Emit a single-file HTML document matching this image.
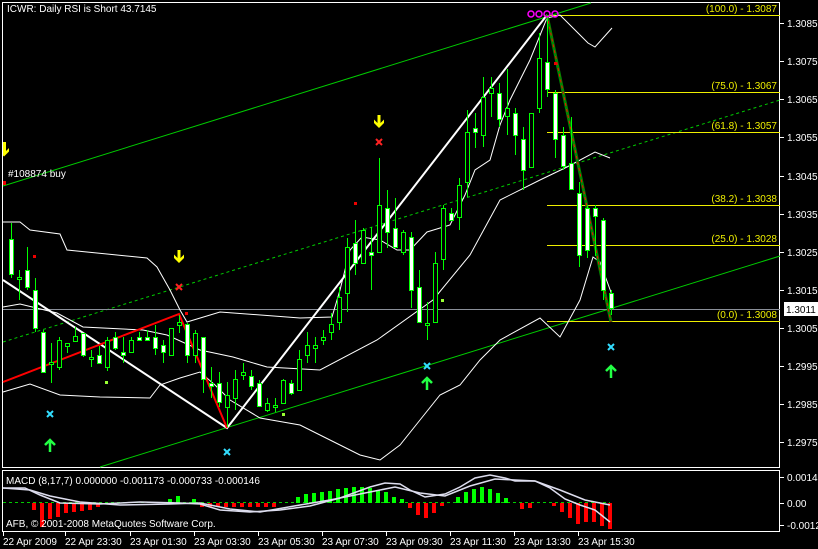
<!DOCTYPE html>
<html><head><meta charset="utf-8"><style>
html,body{margin:0;padding:0;background:#000;width:818px;height:549px;overflow:hidden}
svg{display:block}
text{font-family:"Liberation Sans",sans-serif;font-size:10px;fill:#fff}
</style></head><body>
<svg width="818" height="549" viewBox="0 0 818 549" xmlns="http://www.w3.org/2000/svg">
<rect width="818" height="549" fill="#000"/>
<rect x="2.5" y="2.5" width="777" height="465" fill="none" stroke="#fff" stroke-width="1"/>
<rect x="2.5" y="470.5" width="777" height="61" fill="none" stroke="#fff" stroke-width="1"/>
<line x1="3" y1="186" x2="591" y2="3" stroke="#0c0" stroke-width="1"/>
<line x1="3" y1="342" x2="780" y2="100" stroke="#0c0" stroke-width="1" stroke-dasharray="3,3"/>
<line x1="100" y1="467" x2="780" y2="256" stroke="#0c0" stroke-width="1"/>
<line x1="3" y1="309.5" x2="780" y2="309.5" stroke="#8a8f99" stroke-width="1"/>
<g stroke="#ee0" stroke-width="1">
<line x1="547" y1="15.5" x2="780" y2="15.5"/>
<line x1="547" y1="92.5" x2="780" y2="92.5"/>
<line x1="547" y1="132.5" x2="780" y2="132.5"/>
<line x1="547" y1="205.5" x2="780" y2="205.5"/>
<line x1="547" y1="245.5" x2="780" y2="245.5"/>
<line x1="547" y1="321.5" x2="780" y2="321.5"/>
</g>
<g style="font-size:10px">
<text x="777" y="12" text-anchor="end" style="fill:#ee0">(100.0) - 1.3087</text>
<text x="777" y="89" text-anchor="end" style="fill:#ee0">(75.0) - 1.3067</text>
<text x="777" y="129" text-anchor="end" style="fill:#ee0">(61.8) - 1.3057</text>
<text x="777" y="202" text-anchor="end" style="fill:#ee0">(38.2) - 1.3038</text>
<text x="777" y="242" text-anchor="end" style="fill:#ee0">(25.0) - 1.3028</text>
<text x="777" y="318" text-anchor="end" style="fill:#ee0">(0.0) - 1.3008</text>
</g>
<g fill="none" stroke="#fff" stroke-width="1">
<polyline points="3,222 20,222 30,230 60,234 67,250 147,258 157,267 170,290 180,310 187,322 220,312 300,318 332,317 340,290 350,250 362,237 380,240 397,250 410,250 427,232 450,225 465,195 475,170 490,160 500,125 510,100 530,60 547,18 560,15 575,30 588,43 595,47 612,28"/>
<polyline points="3,307 20,304 57,313 83,327 143,330 167,335 200,350 233,357 267,367 320,370 377,340 433,300 470,255 500,200 540,180 567,167 595,152 610,158"/>
<polyline points="3,392 30,384 60,395 100,397 150,398 160,385 180,378 200,372 215,385 230,400 260,418 300,425 330,440 360,455 380,460 400,445 420,420 440,395 460,385 480,360 500,340 540,318 560,337 580,300 593,257 600,262 612,295"/>
</g>
<polyline points="3,280 227,428 547,15" fill="none" stroke="#fff" stroke-width="2"/>
<polyline points="3,382 179,314 227,428" fill="none" stroke="#f00" stroke-width="2"/>
<line x1="547" y1="15" x2="611" y2="322" stroke="#080" stroke-width="3"/>
<line x1="547" y1="15" x2="611" y2="322" stroke="#f00" stroke-width="1" stroke-dasharray="3,3"/>
<g stroke="#0f0" stroke-width="1">
<path d="M11.5 223V278M19.5 270V300M27.5 247V290M35.5 278V332M43.5 330V372M51.5 343V383M59.5 337V370M67.5 343V353M75.5 327V341M83.5 333V357M91.5 350V367M99.5 346V363M107.5 337V371M115.5 332V350M123.5 337V363M131.5 337V352M139.5 332V340M147.5 330V340M155.5 325V355M163.5 340V363M171.5 328V355M179.5 315V333M187.5 323V363M195.5 330V363M203.5 337V393M211.5 367V398M219.5 372V407M227.5 382V427M235.5 370V410M243.5 363V380M251.5 370V390M259.5 380V407M267.5 398V412M275.5 398V412M283.5 379V404M291.5 380V395M299.5 350V390M307.5 332V363M315.5 337V363M323.5 330V345M331.5 313V340M339.5 287V330M347.5 238V312M355.5 220V275M363.5 228V263M371.5 227V290M379.5 158V252M387.5 190V248M395.5 198V248M403.5 230V255M411.5 232V308M419.5 270V322M427.5 302V340M435.5 252V322M443.5 205V270M451.5 208V220M459.5 178V230M467.5 110V197M475.5 113V148M483.5 77V147M491.5 77V117M499.5 83V127M507.5 69V135M515.5 108V155M523.5 127V190M531.5 113V167M539.5 33V113M547.5 15V97M555.5 90V158M563.5 127V170M571.5 117V190M579.5 182V267M587.5 205V258M595.5 205V256M603.5 218V300M611.5 290V315"/>
<g fill="#fff">
<rect x="9.5" y="239.5" width="4" height="35"/><rect x="25.5" y="270.5" width="4" height="17"/><rect x="33.5" y="290.5" width="4" height="38"/><rect x="41.5" y="332.5" width="4" height="40"/><rect x="81.5" y="333.5" width="4" height="22"/><rect x="97.5" y="355.5" width="4" height="8"/><rect x="113.5" y="337.5" width="4" height="11"/><rect x="121.5" y="352.5" width="4" height="3"/><rect x="137.5" y="337.5" width="4" height="3"/><rect x="145.5" y="337.5" width="4" height="3"/><rect x="153.5" y="337.5" width="4" height="11"/><rect x="161.5" y="345.5" width="4" height="7"/><rect x="185.5" y="324.5" width="4" height="31"/><rect x="201.5" y="337.5" width="4" height="42"/><rect x="209.5" y="383.5" width="4" height="3"/><rect x="217.5" y="383.5" width="4" height="19"/><rect x="249.5" y="376.5" width="4" height="10"/><rect x="257.5" y="383.5" width="4" height="23"/><rect x="289.5" y="383.5" width="4" height="10"/><rect x="353.5" y="243.5" width="4" height="20"/><rect x="369.5" y="252.5" width="4" height="3"/><rect x="385.5" y="208.5" width="4" height="24"/><rect x="393.5" y="228.5" width="4" height="19"/><rect x="409.5" y="237.5" width="4" height="53"/><rect x="417.5" y="287.5" width="4" height="35"/><rect x="449.5" y="213.5" width="4" height="7"/><rect x="473.5" y="128.5" width="4" height="4"/><rect x="497.5" y="93.5" width="4" height="26"/><rect x="513.5" y="113.5" width="4" height="22"/><rect x="521.5" y="139.5" width="4" height="31"/><rect x="545.5" y="62.5" width="4" height="27"/><rect x="553.5" y="93.5" width="4" height="46"/><rect x="561.5" y="135.5" width="4" height="31"/><rect x="569.5" y="163.5" width="4" height="26"/><rect x="577.5" y="193.5" width="4" height="62"/><rect x="585.5" y="208.5" width="4" height="42"/><rect x="593.5" y="208.5" width="4" height="8"/><rect x="601.5" y="220.5" width="4" height="70"/><rect x="609.5" y="293.5" width="4" height="15"/>
</g>
<g fill="#000">
<rect x="17.5" y="277.5" width="4" height="2"/><rect x="49.5" y="362.5" width="4" height="2"/><rect x="57.5" y="340.5" width="4" height="27"/><rect x="65.5" y="343.5" width="4" height="3"/><rect x="73.5" y="336.5" width="4" height="5"/><rect x="89.5" y="357.5" width="4" height="2"/><rect x="105.5" y="340.5" width="4" height="27"/><rect x="129.5" y="340.5" width="4" height="12"/><rect x="169.5" y="328.5" width="4" height="27"/><rect x="177.5" y="322.5" width="4" height="3"/><rect x="193.5" y="333.5" width="4" height="22"/><rect x="225.5" y="395.5" width="4" height="12"/><rect x="233.5" y="379.5" width="4" height="19"/><rect x="241.5" y="372.5" width="4" height="3"/><rect x="265.5" y="403.5" width="4" height="7"/><rect x="273.5" y="405.5" width="4" height="2"/><rect x="281.5" y="380.5" width="4" height="23"/><rect x="297.5" y="359.5" width="4" height="31"/><rect x="305.5" y="345.5" width="4" height="10"/><rect x="313.5" y="345.5" width="4" height="3"/><rect x="321.5" y="337.5" width="4" height="3"/><rect x="329.5" y="324.5" width="4" height="8"/><rect x="337.5" y="297.5" width="4" height="25"/><rect x="345.5" y="247.5" width="4" height="46"/><rect x="361.5" y="230.5" width="4" height="33"/><rect x="377.5" y="205.5" width="4" height="47"/><rect x="401.5" y="232.5" width="4" height="20"/><rect x="425.5" y="323.5" width="4" height="2"/><rect x="433.5" y="263.5" width="4" height="59"/><rect x="441.5" y="208.5" width="4" height="51"/><rect x="457.5" y="185.5" width="4" height="32"/><rect x="465.5" y="132.5" width="4" height="50"/><rect x="481.5" y="97.5" width="4" height="38"/><rect x="489.5" y="88.5" width="4" height="5"/><rect x="505.5" y="108.5" width="4" height="8"/><rect x="529.5" y="113.5" width="4" height="54"/><rect x="537.5" y="58.5" width="4" height="50"/>
</g>
</g>
<g fill="#ff0">
<path d="M3 142h3v9l3-3v3.5l-5 5-1-1z"/>
<path d="M177.5 250h3v8l3.5-3.5v3.5l-5 5-5-5v-3.5l3.5 3.5z"/>
<path d="M377.5 115h3v8l3.5-3.5v3.5l-5 5-5-5v-3.5l3.5 3.5z"/>
</g>
<g stroke="#f22" stroke-width="2"><path d="M176 284l6 6M182 284l-6 6M376 139l6 6M382 139l-6 6"/></g>
<g fill="#e00"><rect x="33" y="255" width="3" height="3"/><rect x="185" y="312" width="3" height="3"/><rect x="354" y="202" width="3" height="3"/><rect x="554" y="62" width="3" height="3"/><rect x="3" y="181" width="3" height="4"/></g>
<g fill="#9f3"><rect x="105" y="381" width="3" height="3"/><rect x="282" y="413" width="3" height="3"/><rect x="441" y="299" width="3" height="3"/></g>
<g stroke="#3df" stroke-width="2"><path d="M47 411l6 6M53 411l-6 6M224 449l6 6M230 449l-6 6M424 363l6 6M430 363l-6 6M608 344l6 6M614 344l-6 6"/></g>
<g stroke="#2f4" stroke-width="2.5" fill="none"><path d="M50 452v-12M45 445l5-5 5 5M427 390v-12M422 383l5-5 5 5M611 378v-12M606 371l5-5 5 5"/></g>
<g fill="none" stroke="#f0f" stroke-width="1.5"><circle cx="531" cy="14" r="3"/><circle cx="539" cy="14" r="3"/><circle cx="547" cy="14" r="3"/><circle cx="555" cy="14" r="3"/></g>
<text x="7" y="12">ICWR: Daily RSI is Short 43.7145</text>
<text x="8" y="177">#108874 buy</text>
<g stroke="#fff"><path d="M780 23.5h4M780 61.5h4M780 99.5h4M780 137.5h4M780 176.5h4M780 214.5h4M780 252.5h4M780 290.5h4M780 328.5h4M780 366.5h4M780 404.5h4M780 442.5h4M780 477.5h4M780 503.5h4M780 525.5h4"/></g>
<g>
<text x="787" y="27">1.3085</text><text x="787" y="65">1.3075</text><text x="787" y="103">1.3065</text><text x="787" y="141">1.3055</text><text x="787" y="180">1.3045</text><text x="787" y="218">1.3035</text><text x="787" y="256">1.3025</text><text x="787" y="294">1.3015</text><text x="787" y="332">1.3005</text><text x="787" y="370">1.2995</text><text x="787" y="408">1.2985</text><text x="787" y="446">1.2975</text>
</g>
<rect x="784" y="302" width="34" height="14" fill="#fff"/>
<text x="786" y="313" style="fill:#000">1.3011</text>
<text x="787" y="481">0.00143</text><text x="787" y="507">0.00</text><text x="787" y="529">-0.00129</text>
<line x1="3" y1="502.5" x2="610" y2="502.5" stroke="#0c0" stroke-dasharray="3,3"/>
<g fill="#f00">
<rect x="32" y="503" width="4" height="7"/><rect x="40" y="503" width="4" height="24"/><rect x="48" y="503" width="4" height="16"/><rect x="56" y="503" width="4" height="14"/><rect x="64" y="503" width="4" height="10"/><rect x="72" y="503" width="4" height="9"/><rect x="80" y="503" width="4" height="8"/><rect x="88" y="503" width="4" height="7"/><rect x="96" y="503" width="4" height="4"/>
<rect x="200" y="503" width="4" height="4"/><rect x="208" y="503" width="4" height="4"/><rect x="216" y="503" width="4" height="4"/><rect x="224" y="503" width="4" height="4"/><rect x="232" y="503" width="4" height="4"/><rect x="240" y="503" width="4" height="4"/><rect x="248" y="503" width="4" height="4"/><rect x="256" y="503" width="4" height="4"/><rect x="264" y="503" width="4" height="4"/><rect x="272" y="503" width="4" height="4"/>
<rect x="408" y="503" width="4" height="5"/><rect x="416" y="503" width="4" height="12"/><rect x="424" y="503" width="4" height="15"/><rect x="432" y="503" width="4" height="10"/><rect x="440" y="503" width="4" height="3"/>
<rect x="520" y="503" width="4" height="6"/><rect x="528" y="503" width="4" height="5"/><rect x="552" y="503" width="4" height="3"/><rect x="560" y="503" width="4" height="9"/><rect x="568" y="503" width="4" height="15"/><rect x="576" y="503" width="4" height="21"/><rect x="584" y="503" width="4" height="19"/><rect x="592" y="503" width="4" height="19"/><rect x="600" y="503" width="4" height="23"/><rect x="608" y="503" width="4" height="26"/>
</g>
<g fill="#0f0">
<rect x="168" y="499" width="4" height="4"/><rect x="176" y="496" width="4" height="7"/><rect x="192" y="499" width="4" height="4"/>
<rect x="296" y="497" width="4" height="6"/><rect x="304" y="494" width="4" height="9"/><rect x="312" y="493" width="4" height="10"/><rect x="320" y="492" width="4" height="11"/><rect x="328" y="491" width="4" height="12"/><rect x="336" y="489" width="4" height="14"/><rect x="344" y="488" width="4" height="15"/><rect x="352" y="487" width="4" height="16"/><rect x="360" y="487" width="4" height="16"/><rect x="368" y="488" width="4" height="15"/><rect x="376" y="490" width="4" height="13"/><rect x="384" y="492" width="4" height="11"/><rect x="392" y="497" width="4" height="6"/><rect x="400" y="499" width="4" height="4"/>
<rect x="456" y="497" width="4" height="6"/><rect x="464" y="492" width="4" height="11"/><rect x="472" y="489" width="4" height="14"/><rect x="480" y="487" width="4" height="16"/><rect x="488" y="489" width="4" height="14"/><rect x="496" y="493" width="4" height="10"/><rect x="504" y="498" width="4" height="5"/>
</g>
<g fill="none" stroke="#dde" stroke-width="1.5">
<polyline points="3,488 25,488 40,495 60,503 100,504 140,502 180,503 200,504 220,510 250,512 280,510 310,506 340,498 370,487 385,483 400,484 410,490 425,497 445,494 460,487 475,478 490,475 505,478 515,481 535,481 550,488 565,499 580,505 595,510 610,522"/>
<polyline points="3,488 30,490 50,496 80,502 120,505 170,504 200,503 230,509 260,512 300,505 330,500 370,492 395,487 420,493 445,496 470,486 495,479 515,480 535,481 560,490 585,500 610,505"/>
</g>
<text x="6" y="484">MACD  (8,17,7) 0.000000 -0.001173 -0.000733 -0.000146</text>
<text x="6" y="527">AFB, © 2001-2008 MetaQuotes Software Corp.</text>
<g stroke="#fff"><path d="M3.5 532v4M65.5 532v4M130.5 532v4M194.5 532v4M258.5 532v4M322.5 532v4M386.5 532v4M450.5 532v4M514.5 532v4M578.5 532v4"/></g>
<g>
<text x="3" y="545">22 Apr 2009</text><text x="65" y="545">22 Apr 23:30</text><text x="130" y="545">23 Apr 01:30</text><text x="194" y="545">23 Apr 03:30</text><text x="258" y="545">23 Apr 05:30</text><text x="322" y="545">23 Apr 07:30</text><text x="386" y="545">23 Apr 09:30</text><text x="450" y="545">23 Apr 11:30</text><text x="514" y="545">23 Apr 13:30</text><text x="578" y="545">23 Apr 15:30</text>
</g>
</svg>
</body></html>
